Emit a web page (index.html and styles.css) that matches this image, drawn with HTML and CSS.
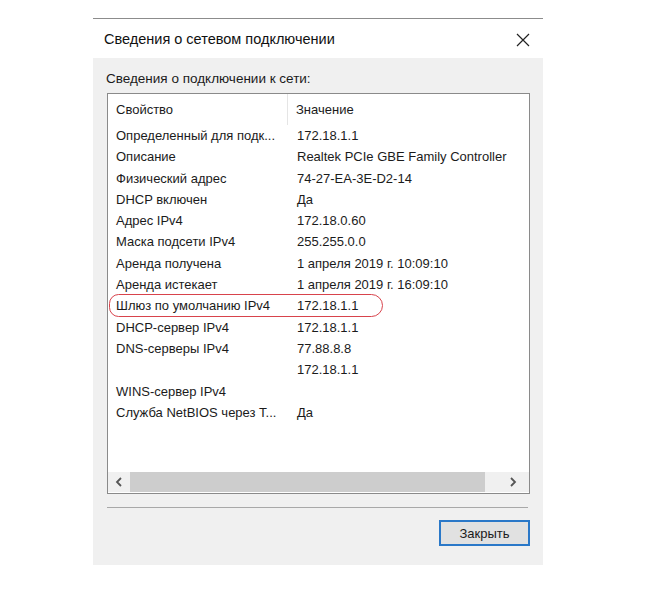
FILE: index.html
```html
<!DOCTYPE html>
<html lang="ru">
<head>
  <meta charset="utf-8" />
  <title>Сведения о сетевом подключении</title>
  <link rel="stylesheet" href="styles.css">
</head>
<body>
  <div class="dialog">
    <div class="titlebar">
      <span class="title">Сведения о сетевом подключении</span>
      <svg class="close" width="14" height="14" viewBox="0 0 14 14">
        <path d="M1 1 L13 13 M13 1 L1 13" stroke="#222" stroke-width="1.2" fill="none" />
      </svg>
    </div>

    <div class="panel">
      <div class="caption">Сведения о подключении к сети:</div>

      <div class="listbox">
        <div class="list">
          <div class="row head">
            <div class="col prop">Свойство</div>
            <div class="col val">Значение</div>
          </div>
          <div class="row"><div class="col prop">Определенный для подк...</div><div class="col val">172.18.1.1</div></div>
          <div class="row"><div class="col prop">Описание</div><div class="col val">Realtek PCIe GBE Family Controller</div></div>
          <div class="row"><div class="col prop">Физический адрес</div><div class="col val">74-27-EA-3E-D2-14</div></div>
          <div class="row"><div class="col prop">DHCP включен</div><div class="col val">Да</div></div>
          <div class="row"><div class="col prop">Адрес IPv4</div><div class="col val">172.18.0.60</div></div>
          <div class="row"><div class="col prop">Маска подсети IPv4</div><div class="col val">255.255.0.0</div></div>
          <div class="row"><div class="col prop">Аренда получена</div><div class="col val">1 апреля 2019 г. 10:09:10</div></div>
          <div class="row"><div class="col prop">Аренда истекает</div><div class="col val">1 апреля 2019 г. 16:09:10</div></div>
          <div class="row marked">
            <div class="col prop">Шлюз по умолчанию IPv4</div><div class="col val">172.18.1.1</div>
            <span class="oval"></span>
          </div>
          <div class="row"><div class="col prop">DHCP-сервер IPv4</div><div class="col val">172.18.1.1</div></div>
          <div class="row"><div class="col prop">DNS-серверы IPv4</div><div class="col val">77.88.8.8</div></div>
          <div class="row"><div class="col prop"></div><div class="col val">172.18.1.1</div></div>
          <div class="row"><div class="col prop">WINS-сервер IPv4</div><div class="col val"></div></div>
          <div class="row"><div class="col prop">Служба NetBIOS через Т...</div><div class="col val">Да</div></div>
        </div>

        <div class="hscroll">
          <span class="arrow">
            <svg width="8" height="10" viewBox="0 0 8 10"><path d="M6 1 L2 5 L6 9" stroke="#555" stroke-width="1.8" fill="none" /></svg>
          </span>
          <span class="thumb"></span>
          <span class="arrow">
            <svg width="8" height="10" viewBox="0 0 8 10"><path d="M2 1 L6 5 L2 9" stroke="#555" stroke-width="1.8" fill="none" /></svg>
          </span>
        </div>
      </div>

      <div class="separator"></div>

      <div class="buttons">
        <button class="btn">Закрыть</button>
      </div>
    </div>
  </div>
</body>
</html>
```

FILE: styles.css
```css
/* страница и окно */
body {
  margin: 0;
  padding: 0;
  background: #fff;
  font-family: "Liberation Sans", Arial, sans-serif;
  color: #1b1b1b;
}
.dialog {
  width: 450px;
  margin: 18px 0 0 93px;
  border-top: 1px solid #8c8c8c;
}
.titlebar {
  height: 39px;
  display: flex;
  align-items: center;
  justify-content: space-between;
  padding: 0 13px 0 11px;
  background: #fff;
}
.title {
  font-size: 14.5px;
  color: #111;
}
.close {
  margin-top: 2px;
}

/* серая панель */
.panel {
  background: #f0f0f0;
  height: 507px;
  padding: 12px 13px 0 14px;
  box-sizing: border-box;
}
.caption {
  font-size: 13.5px;
  line-height: 18px;
  margin-left: -1px;
  margin-bottom: 5px;
}

/* список свойств */
.listbox {
  border: 1px solid #8a8a8a;
  background: #fff;
  height: 401px;
  box-sizing: border-box;
  display: flex;
  flex-direction: column;
}
.list {
  flex: 1;
}
.row {
  position: relative;
  display: flex;
  height: 21.3px;
  line-height: 21.3px;
  font-size: 13px;
  white-space: nowrap;
}
.row.head {
  height: 31px;
  line-height: 31px;
}
.col.prop {
  width: 180px;
  padding-left: 8px;
  box-sizing: border-box;
}
.col.val {
  padding-left: 9px;
}
.head .col.prop {
  border-right: 1px solid #e5e5e5;
}
.head .col.val {
  padding-left: 8px;
}
.oval {
  position: absolute;
  left: 1px;
  top: -1px;
  width: 274px;
  height: 23px;
  box-sizing: border-box;
  border: 1.5px solid #d8434c;
  border-radius: 10px 12px 12px 10px;
  pointer-events: none;
}

/* горизонтальная прокрутка */
.hscroll {
  height: 20px;
  display: flex;
  background: #f0f0f0;
  margin-bottom: 1px;
}
.arrow {
  width: 22px;
  display: flex;
  align-items: center;
  justify-content: center;
}
.thumb {
  flex: 1;
  background: #cdcdcd;
  margin-right: 11px;
}
.hscroll .arrow:last-child {
  width: 33px;
}

.separator {
  height: 1px;
  background: #a8a8a8;
  margin: 13px 2px 0 0;
}
.buttons {
  display: flex;
  justify-content: flex-end;
  padding-top: 12px;
}
.btn {
  width: 91px;
  height: 26px;
  background: #e1e1e1;
  border: 2px solid #2a78c8;
  font-family: "Liberation Sans", Arial, sans-serif;
  font-size: 13px;
  color: #1b1b1b;
  padding: 0;
}
```
